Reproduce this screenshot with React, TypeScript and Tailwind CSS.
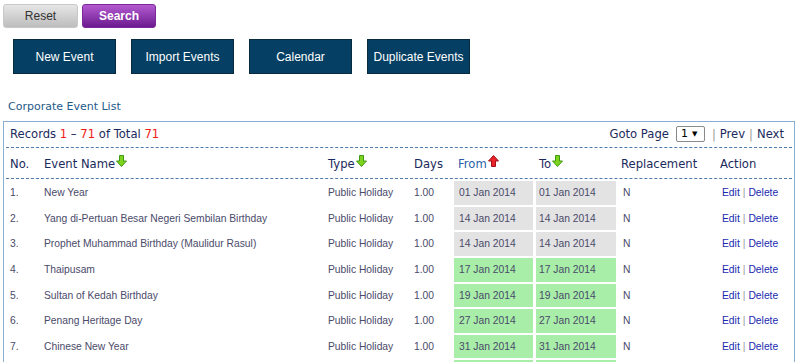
import React from "react";

type Row = { name: string; from: string; to: string; past: boolean };

const rows: Row[] = [
  { name: "New Year", from: "01 Jan 2014", to: "01 Jan 2014", past: true },
  { name: "Yang di-Pertuan Besar Negeri Sembilan Birthday", from: "14 Jan 2014", to: "14 Jan 2014", past: true },
  { name: "Prophet Muhammad Birthday (Maulidur Rasul)", from: "14 Jan 2014", to: "14 Jan 2014", past: true },
  { name: "Thaipusam", from: "17 Jan 2014", to: "17 Jan 2014", past: false },
  { name: "Sultan of Kedah Birthday", from: "19 Jan 2014", to: "19 Jan 2014", past: false },
  { name: "Penang Heritage Day", from: "27 Jan 2014", to: "27 Jan 2014", past: false },
  { name: "Chinese New Year", from: "31 Jan 2014", to: "31 Jan 2014", past: false },
];

const cols = "grid grid-cols-[36px_284px_86px_44px_82px_82px_100px_1fr]";

const SortArrow = ({ up }: { up?: boolean }) => (
  <svg width="11" height="12" viewBox="0 0 11 12" className="inline-block align-top ml-[1px] -mt-[1px]">
    <path
      d={up ? "M5.5 0.5 L10.5 6 L7.5 6 L7.5 11.5 L3.5 11.5 L3.5 6 L0.5 6 Z" : "M3.5 0.5 L7.5 0.5 L7.5 6 L10.5 6 L5.5 11.5 L0.5 6 L3.5 6 Z"}
      fill={up ? "#e8232a" : "#7ed321"}
      stroke={up ? "#a0101a" : "#3f9a12"}
      strokeWidth="1"
    />
  </svg>
);

const NavButton = ({ label }: { label: string }) => (
  <button className="w-[103px] h-[35px] bg-[#053f63] border border-[#0a2a40] text-white text-[12px] font-['Liberation_Sans',Arial,sans-serif]">
    {label}
  </button>
);

export default function App() {
  return (
    <div className="w-[800px] h-[362px] bg-white overflow-hidden font-['Liberation_Sans',Arial,sans-serif]">
      <div className="flex gap-[4px] pl-[3px] pt-[4px]">
        <button className="w-[75px] h-[24px] rounded-[3px] bg-gradient-to-b from-[#e6e6e6] to-[#bdbdbd] border border-[#c8c8c8] text-[#333] text-[12px]">
          Reset
        </button>
        <button className="w-[74px] h-[24px] rounded-[3px] bg-gradient-to-b from-[#b45ad0] to-[#6d1890] border border-[#7a2a9a] text-white text-[12px] font-bold">
          Search
        </button>
      </div>
      <div className="flex gap-[15px] pl-[13px] pt-[11px]">
        <NavButton label="New Event" />
        <NavButton label="Import Events" />
        <NavButton label="Calendar" />
        <NavButton label="Duplicate Events" />
      </div>
      <div className="pl-[8px] pt-[26px] text-[11px] text-[#1f5b8a] font-['DejaVu_Sans',Verdana,sans-serif] leading-[13px]">
        Corporate Event List
      </div>
      <div className="mt-[8px] ml-[3px] w-[792px] border border-[#8aaed0] font-['DejaVu_Sans',Verdana,sans-serif]">
        <div className="flex items-center h-[26px] mx-[2px] border-b border-dashed border-[#4f78ad] text-[11.6px] text-[#1b2a5c]">
          <div className="pl-[4px]">
            Records <span className="text-[#f01818]">1</span> – <span className="text-[#f01818]">71</span> of Total{" "}
            <span className="text-[#f01818]">71</span>
          </div>
          <div className="ml-auto flex items-center pr-[8px]">
            <span>Goto Page</span>
            <span className="ml-[7px] flex items-center h-[16px] w-[29px] border border-[#8a8a8a] rounded-[2px] bg-white text-[11px] pl-[4px] gap-[4px] text-black">
              1 <span className="text-[7px]">▼</span>
            </span>
            <span className="ml-[7px] text-[#999]">|</span>
            <span className="ml-[4px]">Prev</span>
            <span className="ml-[4px] text-[#999]">|</span>
            <span className="ml-[4px]">Next</span>
          </div>
        </div>
        <div className={`${cols} h-[31px] pt-[3px] mx-[2px] items-center border-b border-dashed border-[#4f78ad] text-[11.6px] text-[#1b2a5c]`}>
          <div className="pl-[4px]">No.</div>
          <div className="pl-[2px]">Event Name<SortArrow /></div>
          <div className="pl-[2px]">Type<SortArrow /></div>
          <div className="pl-[2px]">Days</div>
          <div className="pl-[2px] text-[#2a5fa8]">From<SortArrow up /></div>
          <div className="pl-[1px]">To<SortArrow /></div>
          <div className="pl-[1px]">Replacement</div>
          <div className="pl-[0px]">Action</div>
        </div>
        <div className="pt-[1px] font-['Liberation_Sans',Arial,sans-serif] text-[10.3px] text-[#4a4a6a]">
          {rows.map((r, i) => {
            const cell = r.past ? "bg-[#e3e3e3]" : "bg-[#a8eea8]";
            return (
              <div key={i} className={`${cols} h-[25.65px] items-stretch`}>
                <div className="pl-[6px] flex items-center">{i + 1}.</div>
                <div className="pl-[4px] flex items-center">{r.name}</div>
                <div className="pl-[4px] flex items-center">Public Holiday</div>
                <div className="pl-[4px] flex items-center">1.00</div>
                <div className="py-[1px] pr-[3px]">
                  <div className={`${cell} h-full flex items-center pl-[5px]`}>{r.from}</div>
                </div>
                <div className="py-[1px] pr-[2px]">
                  <div className={`${cell} h-full flex items-center pl-[3px]`}>{r.to}</div>
                </div>
                <div className="pl-[5px] flex items-center">N</div>
                <div className="pl-[4px] flex items-center text-[#1a2ab0]">
                  Edit <span className="mx-[3px] text-[#999]">|</span> Delete
                </div>
              </div>
            );
          })}
          <div className={`${cols} h-[10px] items-stretch`}>
            <div />
            <div />
            <div />
            <div />
            <div className="pt-[1px] pr-[3px]">
              <div className="bg-[#a8eea8] h-full" />
            </div>
            <div className="pt-[1px] pr-[2px]">
              <div className="bg-[#a8eea8] h-full" />
            </div>
          </div>
        </div>
      </div>
    </div>
  );
}
